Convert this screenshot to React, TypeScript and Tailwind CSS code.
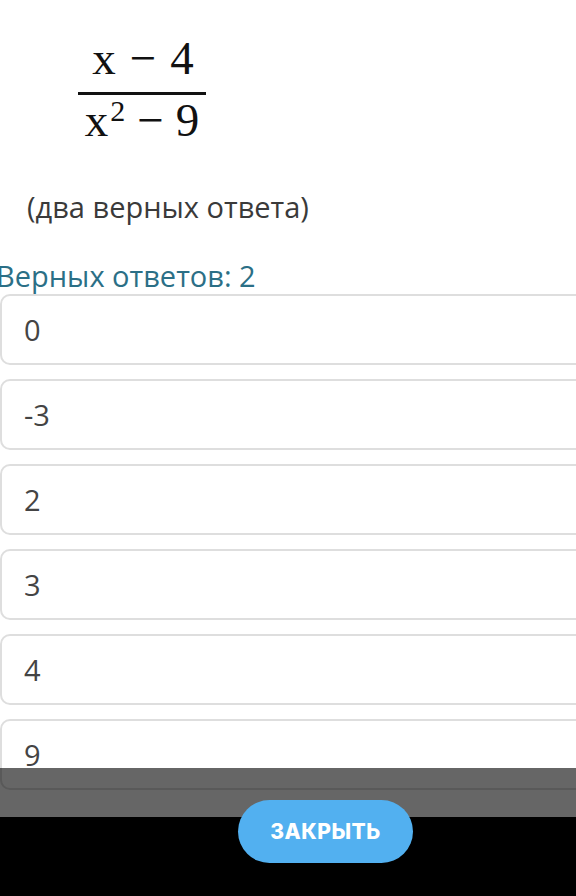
const answers = ["0", "-3", "2", "3", "4", "9"];

const serif = { fontFamily: '"Liberation Serif", "Times New Roman", serif' };

export default function App() {
  return (
    <div className="relative h-[896px] w-[576px] overflow-hidden bg-white font-['Open_Sans',sans-serif]">
      <div className="pl-[78px] pt-[32px]">
        <div className="flex w-[128px] flex-col items-center text-[#111]" style={serif}>
          <div className="flex items-baseline gap-[14px] pl-[2px] text-[47px] leading-[52px]">
            <span>x</span>
            <span>−</span>
            <span>4</span>
          </div>
          <div className="mt-[8px] h-[3px] w-[128px] bg-[#111]" />
          <div className="flex items-baseline gap-[12px] text-[47px] leading-[50px]">
            <span>
              x<sup className="ml-[2px] text-[30px]">2</sup>
            </span>
            <span>−</span>
            <span>9</span>
          </div>
        </div>
      </div>

      <p className="mt-[44px] pl-[27px] text-[29px] leading-[36px] text-[#3a3a3a]">
        (два верных ответа)
      </p>

      <p className="mt-[33px] ml-[-4px] text-[29px] leading-[36px] text-[#2b6f86]">
        Верных ответов: 2
      </p>

      <div className="flex w-[600px] flex-col gap-[14px]">
        {answers.map((a) => (
          <div
            key={a}
            className="flex h-[71px] items-center rounded-[10px] border-2 border-[#dedede] bg-white pl-[22px] text-[29px] text-[#444]"
          >
            {a}
          </div>
        ))}
      </div>

      <div className="absolute inset-x-0 top-[768px] h-[49px] bg-black/60" />
      <div className="absolute inset-x-0 top-[817px] bottom-0 bg-black" />
      <button className="absolute left-[238px] top-[800px] flex h-[63px] w-[175px] items-center justify-center rounded-full bg-[#52b0f0] font-['Inter',sans-serif] text-[21px] font-extrabold tracking-[0.5px] text-white">
        ЗАКРЫТЬ
      </button>
    </div>
  );
}
